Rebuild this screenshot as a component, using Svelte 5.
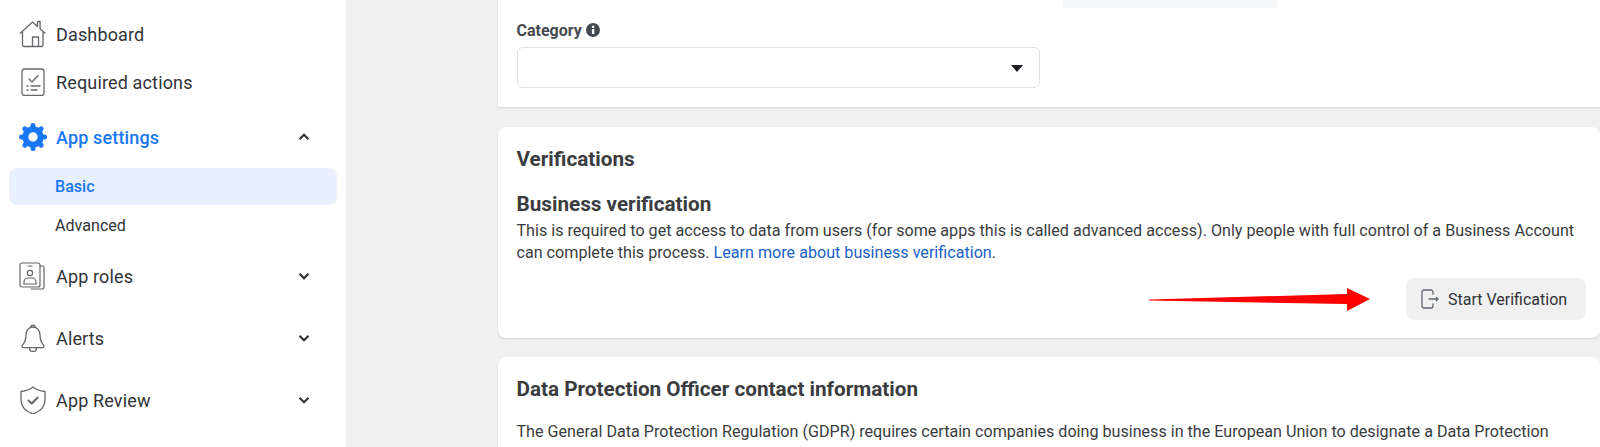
<script>
  const gearTeeth = [0, 45, 90, 135, 180, 225, 270, 315];
</script>

<div class="page">
  <aside class="sidebar">
    <div class="nav-row first">
      <svg class="icon" viewBox="0 0 28 28" fill="none" stroke="#65676b" stroke-width="1.3" stroke-linejoin="round">
        <path d="M1 13.5 13.5 2l5 4.6V1.500h2.600v7.500L26.500 13.500" />
        <path d="M3.500 11.500v13.500a1.500 1.500 0 0 0 1.500 1.500h17.500a1.500 1.500 0 0 0 1.500-1.500V11.500" />
        <path d="M13.500 26.500V17h6v9.500" />
      </svg>
      <span>Dashboard</span>
    </div>
    <div class="nav-row second">
      <svg class="icon" viewBox="0 0 28 28" fill="none" stroke="#65676b" stroke-width="1.3" stroke-linecap="round" stroke-linejoin="round">
        <rect x="3" y="1" width="22" height="26.500" rx="2.500" />
        <path d="m10 11 3 3 6-6.500M8 18h1M12 18h9M8 22h1M12 22h6" />
      </svg>
      <span>Required actions</span>
    </div>
    <div class="nav-row active-head">
      <svg class="icon" viewBox="0 0 28 28">
        <circle cx="14" cy="14" r="7.700" fill="none" stroke="#1877f2" stroke-width="6" />
        {#each gearTeeth as angle}
          <line x1="14" y1="3" x2="14" y2="2.500" stroke="#1877f2" stroke-width="5" stroke-linecap="round" transform="rotate({angle} 14 14)" />
        {/each}
      </svg>
      <span class="active-label">App settings</span>
      <svg class="chev" viewBox="0 0 12 8"><path d="M1.500 6.200 6 1.800l4.500 4.400" /></svg>
    </div>
    <div class="sub-row selected">Basic</div>
    <div class="sub-row">Advanced</div>
    <div class="nav-row roles">
      <svg class="icon" viewBox="0 0 28 28" fill="none" stroke="#65676b" stroke-width="1.200" stroke-linecap="round" stroke-linejoin="round">
        <rect x="1" y="1" width="20" height="24" rx="2" />
        <path d="M21 4h2.500a1.500 1.500 0 0 1 1.500 1.500V25a2 2 0 0 1-2 2H12" />
        <path d="M9 4h4" />
        <circle cx="11" cy="11" r="2.600" />
        <path d="M5 22v-2a4 4 0 0 1 4-4h4a4 4 0 0 1 4 4v2z" />
      </svg>
      <span>App roles</span>
      <svg class="chev" viewBox="0 0 12 8"><path d="M1.500 1.800 6 6.200l4.500-4.400" /></svg>
    </div>
    <div class="nav-row alerts">
      <svg class="icon" viewBox="0 0 28 28" fill="none" stroke="#65676b" stroke-width="1.300" stroke-linejoin="round">
        <path d="M11.800 3.400a2.200 2.200 0 1 1 4.400 0" />
        <path d="M14 3c-4.200 0-7 3.500-7 8 0 5.500-1.300 7.500-3.500 10-1 1-.5 2.700 1 2.700h19c1.500 0 2-1.700 1-2.700-2.200-2.500-3.500-4.500-3.500-10 0-4.500-2.800-8-7-8z" />
        <path d="M10.500 24c0 2.300 1.500 3.500 3.500 3.500s3.500-1.200 3.500-3.500" />
      </svg>
      <span>Alerts</span>
      <svg class="chev" viewBox="0 0 12 8"><path d="M1.500 1.800 6 6.200l4.500-4.400" /></svg>
    </div>
    <div class="nav-row review">
      <svg class="icon" viewBox="0 0 28 28" fill="none" stroke="#65676b" stroke-width="1.300" stroke-linecap="round" stroke-linejoin="round">
        <path d="M14 1c3 2.500 7 4 12 4.500V14c0 7-5 11.500-12 14C7 25.500 2 21 2 14V5.500C7 5 11 3.500 14 1z" />
        <path stroke-width="2" d="m9.500 14.500 3.200 3 6-6" />
      </svg>
      <span>App Review</span>
      <svg class="chev" viewBox="0 0 12 8"><path d="M1.500 1.800 6 6.200l4.500-4.400" /></svg>
    </div>
  </aside>

  <main class="content">
    <div class="stub"></div>
    <section class="card top-card">
      <div class="field-label">
        Category
        <svg class="info" viewBox="0 0 14 14">
          <circle cx="7" cy="7" r="7" fill="#444950" />
          <rect x="5.900" y="6" width="2.400" height="5" fill="#fff" />
          <rect x="5.900" y="2.800" width="2.400" height="2.200" fill="#fff" />
        </svg>
      </div>
      <div class="select"><span class="caret"></span></div>
    </section>

    <section class="card verify-card">
      <h2>Verifications</h2>
      <h3>Business verification</h3>
      <p>This is required to get access to data from users (for some apps this is called advanced access). Only people with full control of a Business Account can complete this process. <a href="#top">Learn more about business verification</a>.</p>
      <div class="actions">
        <svg class="arrow" viewBox="0 0 221 23">
          <path fill="#ff0000" d="M0 11.500 198 6V0L221 11 198 23V16L0 12.500z" />
        </svg>
        <button>
          <svg viewBox="0 0 18 20" fill="none" stroke="#606770" stroke-width="1.300" stroke-linecap="round" stroke-linejoin="round">
            <path d="M12 5V3a2 2 0 0 0-2-2H3a2 2 0 0 0-2 2v14a2 2 0 0 0 2 2h7a2 2 0 0 0 2-2v-2" />
            <path d="M8 10h9M15.500 8.500 17 10l-1.500 1.500" />
          </svg>
          Start Verification
        </button>
      </div>
    </section>

    <section class="card dpo-card">
      <h2>Data Protection Officer contact information</h2>
      <p>The General Data Protection Regulation (GDPR) requires certain companies doing business in the European Union to designate a Data Protection</p>
    </section>
  </main>
</div>

<style>
  :global(body) {
    margin: 0;
    background: #f0f0f0;
  }

  .page {
    display: flex;
    width: 1600px;
    height: 447px;
    overflow: hidden;
    font-family: Roboto, "Liberation Sans", sans-serif;
    color: #1c1e21;
  }

  .sidebar {
    width: 346px;
    flex: none;
    background: #fff;
    box-sizing: border-box;
    padding: 0 19px;
  }

  .nav-row {
    display: flex;
    align-items: center;
    height: 28px;
    font-size: 18px;
    color: #303338;
  }

  .nav-row span {
    flex: 1;
    margin-left: 9px;
    letter-spacing: 0.15px;
  }

  .first { margin-top: 20px; }
  .second { margin-top: 20px; }
  .active-head { margin-top: 27px; }
  .roles { margin-top: 18px; }
  .alerts { margin-top: 34px; }
  .review { margin-top: 34px; }

  .icon {
    width: 28px;
    height: 28px;
    flex: none;
  }

  .nav-row .active-label {
    color: #1877f2;
    font-weight: 500;
  }

  .chev {
    width: 12px;
    height: 8px;
    margin-right: 17px;
    fill: none;
    stroke: #303338;
    stroke-width: 2.200;
  }

  .sub-row {
    margin: 0 -10px;
    padding-left: 46px;
    height: 37px;
    line-height: 38px;
    font-size: 16.100px;
    color: #303338;
    border-radius: 8px;
  }

  .selected {
    margin-top: 17px;
    margin-bottom: 2px;
    background: #e7f0fc;
    color: #1877f2;
    font-weight: 500;
  }

  .content {
    flex: 1;
    padding-left: 152px;
    min-width: 0;
    position: relative;
  }

  .stub {
    position: absolute;
    top: 0;
    left: 717px;
    width: 214px;
    height: 8px;
    background: #f5f6f7;
  }

  .card {
    background: #fff;
    box-sizing: border-box;
    padding: 0 19px 0 18.500px;
    box-shadow: 0 1px 2px rgba(0, 0, 0, 0.12);
  }

  .top-card {
    height: 107px;
    padding-top: 20px;
  }

  .field-label {
    display: flex;
    align-items: center;
    gap: 4px;
    font-size: 16px;
    font-weight: 700;
    color: #444950;
    height: 20px;
  }

  .info {
    width: 14px;
    height: 14px;
  }

  .select {
    width: 523px;
    height: 41px;
    margin-top: 7px;
    border: 1px solid #dddfe2;
    border-radius: 6px;
    box-sizing: border-box;
    position: relative;
  }

  .caret {
    position: absolute;
    right: 16px;
    top: 17px;
    width: 0;
    height: 0;
    border-left: 6px solid transparent;
    border-right: 6px solid transparent;
    border-top: 7px solid #1c1e21;
  }

  .verify-card {
    margin-top: 20px;
    height: 211px;
    border-radius: 8px;
    padding-top: 20px;
  }

  h2 {
    margin: 0;
    font-size: 20.700px;
    line-height: 24px;
    font-weight: 700;
    color: #3a3c40;
  }

  h3 {
    margin: 21px 0 0;
    font-size: 20.700px;
    line-height: 24px;
    font-weight: 700;
    color: #3a3c40;
  }

  p {
    margin: 4px 0 0;
    font-size: 16.140px;
    line-height: 22px;
    color: #3a3c40;
  }

  a {
    color: #1b5fc9;
    text-decoration: none;
  }

  .actions {
    display: flex;
    justify-content: flex-end;
    align-items: center;
    margin-top: 14px;
    margin-right: -5px;
  }

  .arrow {
    width: 221px;
    height: 23px;
    margin-right: 36px;
  }

  button {
    display: flex;
    align-items: center;
    gap: 9px;
    width: 180px;
    height: 42px;
    padding: 0 0 0 15px;
    border: none;
    border-radius: 8px;
    background: #f0f0f0;
    font: inherit;
    font-size: 16px;
    color: #303338;
  }

  button svg {
    width: 18px;
    height: 20px;
  }

  .dpo-card {
    margin-top: 19px;
    height: 120px;
    border-radius: 8px 8px 0 0;
    padding-top: 20px;
  }

  .dpo-card p {
    margin-top: 20px;
  }
</style>
